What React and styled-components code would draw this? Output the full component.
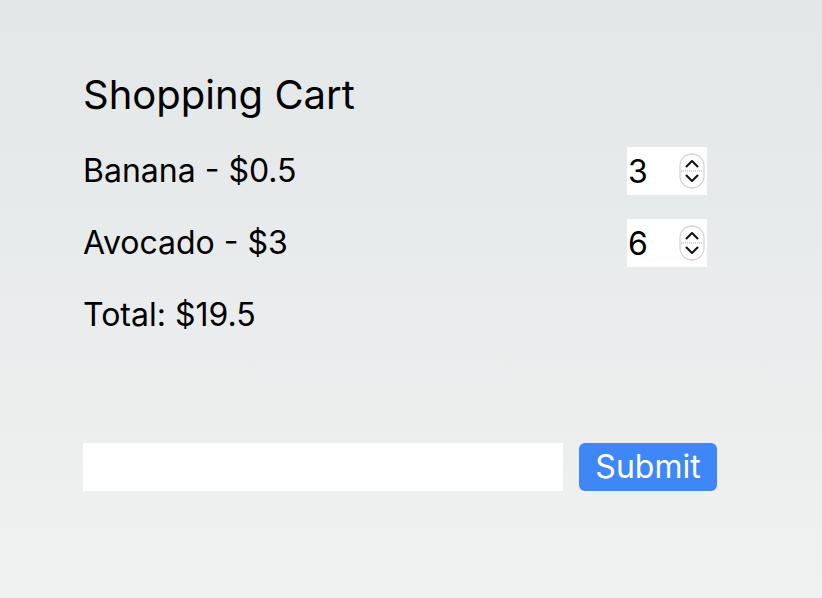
import React, { useState } from "react";
import styled, { createGlobalStyle } from "styled-components";

const GlobalStyle = createGlobalStyle`
  html, body {
    margin: 0;
    padding: 0;
    height: 100%;
  }
  body {
    font-family: Inter, "Noto Sans", sans-serif;
    color: #000;
    background: linear-gradient(180deg, #e3e7e8 0%, #f0f1f1 100%);
    min-height: 598px;
  }
  input[type=number]::-webkit-inner-spin-button,
  input[type=number]::-webkit-outer-spin-button {
    -webkit-appearance: none;
    margin: 0;
  }
`;

const Page = styled.main`
  padding: 71px 0 0 83px;
  width: 634px;
`;

const Title = styled.h1`
  font-size: 40px;
  font-weight: 400;
  margin: 0 0 28px;
  line-height: 48px;
`;

const Row = styled.div`
  display: flex;
  align-items: center;
  justify-content: space-between;
  width: 624px;
  height: 48px;
  margin-bottom: 24px;
`;

const Label = styled.span`
  font-size: 32px;
  line-height: 48px;
`;

const QtyBox = styled.div`
  display: flex;
  align-items: center;
  width: 80px;
  height: 48px;
  background: #fff;
`;

const QtyInput = styled.input`
  width: 50px;
  border: none;
  outline: none;
  background: transparent;
  font-family: inherit;
  font-size: 32px;
  padding: 0 0 0 1px;
  margin: 0;
  -moz-appearance: textfield;
`;

const Spinner = styled.svg`
  margin-left: 1px;
  flex: none;
`;

const Total = styled.div`
  font-size: 32px;
  line-height: 48px;
  margin-top: 3px;
`;

const Form = styled.form`
  display: flex;
  gap: 16px;
  margin-top: 104px;
`;

const TextInput = styled.input`
  width: 480px;
  height: 48px;
  box-sizing: border-box;
  border: none;
  background: #fff;
  font-family: inherit;
  font-size: 24px;
  padding: 0 8px;
  outline: none;
`;

const SubmitButton = styled.button`
  width: 138px;
  height: 48px;
  border: none;
  border-radius: 6px;
  background: #3f86f7;
  color: #fff;
  font-family: inherit;
  font-size: 32px;
  padding: 0 0 2px;
  cursor: pointer;
`;

const SpinIcon = () => (
  <Spinner width="26" height="36" viewBox="0 0 26 36">
    <rect x="1" y="1" width="24" height="34" rx="12" fill="#fff" stroke="#d4d4d4" strokeWidth="1.3" />
    <line x1="2" y1="18" x2="24" y2="18" stroke="#c4c4c4" strokeWidth="1.5" strokeDasharray="1 1" />
    <path d="M7.5 13.5 L13 8 L18.5 13.5" fill="none" stroke="#111" strokeWidth="2" strokeLinecap="round" strokeLinejoin="round" />
    <path d="M7.5 22.5 L13 28 L18.5 22.5" fill="none" stroke="#111" strokeWidth="2" strokeLinecap="round" strokeLinejoin="round" />
  </Spinner>
);

const items = [
  { name: "Banana", price: 0.5, qty: 3 },
  { name: "Avocado", price: 3, qty: 6 },
];

export default function App() {
  const [cart, setCart] = useState(items);
  const total = cart.reduce((s, i) => s + i.price * i.qty, 0);

  return (
    <>
      <GlobalStyle />
      <Page>
        <Title>Shopping Cart</Title>
        {cart.map((item, idx) => (
          <Row key={item.name}>
            <Label>
              {item.name} - ${item.price}
            </Label>
            <QtyBox>
              <QtyInput
                type="number"
                value={item.qty}
                onChange={(e) => {
                  const next = [...cart];
                  next[idx] = { ...item, qty: Number(e.target.value) };
                  setCart(next);
                }}
              />
              <SpinIcon />
            </QtyBox>
          </Row>
        ))}
        <Total>Total: ${total}</Total>
        <Form onSubmit={(e) => e.preventDefault()}>
          <TextInput type="text" />
          <SubmitButton type="submit">Submit</SubmitButton>
        </Form>
      </Page>
    </>
  );
}
